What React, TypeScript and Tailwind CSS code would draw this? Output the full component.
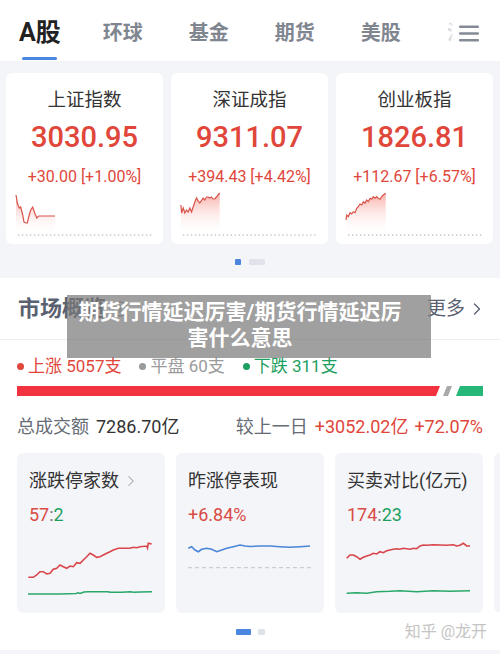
import React from 'react';
import { ChevronRight } from 'lucide-react';

const FONT = "font-['Roboto','Noto_Sans_CJK_SC',sans-serif]";

const indices = [
  {
    name: '上证指数',
    value: '3030.95',
    change: '+30.00 [+1.00%]',
    box: '6 192 157 45',
    line: '16,195 17.3,203 19.3,208 20.7,207 22.7,215 24,222 26,223 27.3,223 28.7,217 30.7,210 32.7,207 34.7,213 36.7,218 38.7,216 55,216',
    fill: '55,235 16,235',
    dots: [18, 153],
  },
  {
    name: '深证成指',
    value: '9311.07',
    change: '+394.43 [+4.42%]',
    box: '171 192 158 45',
    line: '181,205 181.7,213 183.3,208 185,213 186.7,210 188.3,212 190,208 191.7,212 193.3,207 195,202 196.7,198 198.3,201 200,203 203.3,198 205,200 206.7,197 208.3,197 210,198 211.7,197 213.3,199 215,199 216.7,197 218.3,195 220,193',
    fill: '220,235 181,235',
    dots: [183, 318],
  },
  {
    name: '创业板指',
    value: '1826.81',
    change: '+112.67 [+6.57%]',
    box: '336 192 157 45',
    line: '346,220 346.7,215 348.3,216.7 350,212.7 351.7,214 353.3,211.7 355,212.7 356.7,208.3 358.3,206.7 360,204 361.7,205 363.3,201.7 365,203.3 366.7,200 368.3,201.7 370,198.3 371.7,199.3 373.3,196.7 375,198.3 376.7,196.7 378.3,198.3 380,199.3 381.7,196.7 383.3,195 385.7,193.3',
    fill: '385.7,235 346,235',
    dots: [348, 483],
  },
];

function IndexCard({ item, idx }: { item: (typeof indices)[number]; idx: number }) {
  const gid = `spark-${idx}`;
  return (
    <div className="flex-1 bg-white rounded-[6px] flex flex-col items-center pt-[15px] pb-[7px]">
      <div className="text-[18.5px] leading-[24px] text-[#333]">{item.name}</div>
      <div className="mt-[7px] text-[29px] leading-[36px] font-medium text-[#e0463a]">{item.value}</div>
      <div className="mt-[12px] text-[16px] leading-[20px] text-[#e0463a]">{item.change}</div>
      <svg className="mt-[5px] block w-full h-[45px]" viewBox={item.box} preserveAspectRatio="none">
        <defs>
          <linearGradient id={gid} x1="0" y1="0" x2="0" y2="1">
            <stop offset="0%" stopColor="#f26b5f" stopOpacity="0.55" />
            <stop offset="100%" stopColor="#ffffff" stopOpacity="0" />
          </linearGradient>
        </defs>
        <polygon points={`${item.line} ${item.fill}`} fill={`url(#${gid})`} />
        <polyline points={item.line} fill="none" stroke="#d9534a" strokeWidth="1.2" />
        <line x1={item.dots[0]} y1="235" x2={item.dots[1]} y2="235" stroke="#c9c9c9" strokeWidth="1.4" strokeDasharray="1.4 2.6" />
      </svg>
    </div>
  );
}

function Legend({ dot, label, value, color }: { dot: string; label: string; value: string; color: string }) {
  return (
    <div className={`flex items-center ${color}`}>
      <span className={`w-[7px] h-[7px] rounded-full mr-[4px] ${dot}`} />
      <span>{label} {value}</span>
    </div>
  );
}

export default function App() {
  return (
    <div className={`w-[500px] h-[654px] overflow-hidden bg-[#f4f5f9] ${FONT}`}>
      {/* tabs */}
      <div className="h-[61px] bg-white flex items-start pl-[19px] pt-[19px]">
        <div className="flex items-start gap-[46px]">
          <div className="flex flex-col items-center mr-[-4px]">
            <span className="text-[25px] leading-[28px] font-bold text-[#222]">A股</span>
            <span className="mt-[10px] w-[35px] h-[3px] rounded-full bg-[#4a86e0]" />
          </div>
          {['环球', '基金', '期货', '美股'].map((t) => (
            <span key={t} className="text-[20px] leading-[28px] font-bold text-[#7f8690]">{t}</span>
          ))}
        </div>
        <div className="ml-auto mr-[21px] flex items-center h-[28px]">
          <span className="text-[20px] leading-[28px] font-bold bg-gradient-to-r from-[#cfd3d9] from-[10%] to-transparent to-[35%] bg-clip-text text-transparent mr-[-8px]">
            沪
          </span>
          <svg width="20" height="17" viewBox="0 0 20 17" className="relative">
            <rect x="0" y="0.5" width="20" height="2.6" rx="1" fill="#858b96" />
            <rect x="0" y="7.2" width="20" height="2.6" rx="1" fill="#858b96" />
            <rect x="0" y="13.9" width="20" height="2.6" rx="1" fill="#858b96" />
          </svg>
        </div>
      </div>

      {/* index cards */}
      <div className="pt-[12px] pl-[6px] pr-[7px] flex gap-[8px]">
        {indices.map((it, i) => (
          <IndexCard key={it.name} item={it} idx={i} />
        ))}
      </div>
      <div className="flex justify-center items-center gap-[8px] mt-[15px] h-[6px]">
        <span className="w-[6px] h-[6px] bg-[#4a86e0] rounded-[1px]" />
        <span className="w-[16px] h-[6px] bg-[#e1e3ec] rounded-[1px]" />
      </div>

      {/* market overview */}
      <div className="relative mt-[13px] bg-white h-[372px]">
        <div className="flex items-center justify-between pl-[18px] pr-[13px] pt-[16px] pb-[15px]">
          <div className="flex items-center gap-[6px]">
            <span className="text-[22px] leading-[30px] font-bold text-[#5a6170]">市场概览</span>
            <svg width="16" height="16" viewBox="0 0 16 16">
              <circle cx="8" cy="8" r="7" fill="none" stroke="#9aa0aa" strokeWidth="1.5" />
              <rect x="7.2" y="6.8" width="1.6" height="5" fill="#9aa0aa" />
              <rect x="7.2" y="4" width="1.6" height="1.6" fill="#9aa0aa" />
            </svg>
          </div>
          <div className="flex items-center text-[19px] leading-[30px] text-[#5a6170]">
            更多
            <ChevronRight size={20} strokeWidth={1.6} className="ml-[2px]" />
          </div>
        </div>
        <div className="h-px bg-[#eeeeee]" />

        <div className="px-[17px] pt-[14px] flex items-center gap-[18px] text-[17px] leading-[24px]">
          <Legend dot="bg-[#e0463a]" label="上涨" value="5057支" color="text-[#e0463a]" />
          <Legend dot="bg-[#9a9a9a]" label="平盘" value="60支" color="text-[#9a9a9a]" />
          <Legend dot="bg-[#1d9f5f]" label="下跌" value="311支" color="text-[#1d9f5f]" />
        </div>

        <svg className="block mt-[8px]" width="500" height="10" viewBox="0 386 500 10">
          <polygon points="17,386 440,386 436,396 17,396" fill="#f2333f" />
          <polygon points="447,386 452,386 448,396 443,396" fill="#a9a9a9" />
          <polygon points="460,386 483,386 483,396 456,396" fill="#25b777" />
        </svg>

        <div className="mt-[19px] px-[17px] flex items-center justify-between text-[18px] leading-[24px]">
          <div>
            <span className="text-[#666b75]">总成交额</span>
            <span className="ml-[7px] text-[#333]">7286.70亿</span>
          </div>
          <div>
            <span className="text-[#666b75]">较上一日</span>
            <span className="ml-[7px] text-[#e0463a]">+3052.02亿</span>
            <span className="ml-[6px] text-[#e0463a]">+72.07%</span>
          </div>
        </div>

        {/* mini cards */}
        <div className="mt-[14px] pl-[17px] flex gap-[11px] overflow-hidden">
          <div className="w-[148px] shrink-0 h-[160px] rounded-[6px] bg-[#f4f5f9] pt-[16px]">
            <div className="px-[12px] flex items-center text-[18px] leading-[24px] text-[#333]">
              涨跌停家数
              <ChevronRight size={18} strokeWidth={1.4} className="ml-[3px] text-[#a0a4ab]" />
            </div>
            <div className="px-[12px] mt-[10px] text-[18px] leading-[24px]">
              <span className="text-[#d94b45]">57</span>
              <span className="text-[#777]">:</span>
              <span className="text-[#1d9f5f]">2</span>
            </div>
            <svg className="block mt-[8px]" width="148" height="70" viewBox="17 535 148 70">
              <polyline
                points="28.3,577.3 33.3,577.3 36.7,575 40,571.7 43.3,571.7 46.7,574 50,573.3 53.3,569.3 56.7,568.3 60,565 63.3,566.7 66.7,568.3 70,566 73.3,566.7 76.7,562.7 80,563.3 83.3,560 86.7,556.7 90,553.3 93.3,555 96.7,557.3 100,556.7 103.3,555 106.7,553.3 110,551.7 113.3,550 118.3,548.3 123.3,548.3 130,548.3 133.3,547.3 136.7,547.7 140,546.7 146.7,546 147.5,548 148.3,543.3 151.7,544"
                fill="none"
                stroke="#d8454a"
                strokeWidth="1.6"
              />
              <polyline
                points="28,594 60,594 76,593.5 78,592.8 80,593.5 84,592 88,591.7 108,591.7 110,592.3 122,592.3 130,591.7 134,592.3 140,592 152,591.7"
                fill="none"
                stroke="#2aa86a"
                strokeWidth="1.6"
              />
            </svg>
          </div>

          <div className="w-[148px] shrink-0 h-[160px] rounded-[6px] bg-[#f4f5f9] pt-[16px]">
            <div className="px-[12px] text-[18px] leading-[24px] text-[#333]">昨涨停表现</div>
            <div className="px-[12px] mt-[10px] text-[18px] leading-[24px] text-[#d94b45]">+6.84%</div>
            <svg className="block mt-[8px]" width="148" height="70" viewBox="176 535 148 70">
              <polyline
                points="188.3,548.3 191.7,546.7 195,550 198.3,551.7 201.7,549.3 206.7,548.3 211.7,549.3 216.7,551.7 221.7,550 226.7,548.3 233.3,546.7 240,545 245,546 250,546.5 260,546 270,546 280,546.7 290,547.3 300,546.7 310,546"
                fill="none"
                stroke="#4a86d8"
                strokeWidth="1.6"
              />
              <line x1="188" y1="567.7" x2="312" y2="567.7" stroke="#c4c6cc" strokeWidth="1" strokeDasharray="4 3" />
            </svg>
          </div>

          <div className="w-[148px] shrink-0 h-[160px] rounded-[6px] bg-[#f4f5f9] pt-[16px]">
            <div className="px-[12px] text-[18px] leading-[24px] text-[#333]">买卖对比(亿元)</div>
            <div className="px-[12px] mt-[10px] text-[18px] leading-[24px]">
              <span className="text-[#d94b45]">174</span>
              <span className="text-[#777]">:</span>
              <span className="text-[#1d9f5f]">23</span>
            </div>
            <svg className="block mt-[8px]" width="148" height="70" viewBox="335 535 148 70">
              <polyline
                points="346.7,558.3 350,555 353.3,555 356.7,556.7 360,559.3 363.3,557.3 366.7,556 370,555 373.3,553.3 376.7,554 380,551.7 383.3,552.7 386.7,550.7 390,550 393.3,549.3 396.7,548.7 400,549.3 403.3,548.3 406.7,548.7 410,549.3 413.3,548.3 416.7,548.7 420,546 423.3,545 426.7,545.3 433.3,544.7 440,545 446.7,545.3 453.3,544.7 456.7,546 460,545.3 463.3,543.3 466.7,546 470,546"
                fill="none"
                stroke="#d8454a"
                strokeWidth="1.6"
              />
              <polyline
                points="346.7,593.3 356.7,592.7 366.7,593.3 376.7,591.7 390,591.3 400,590.7 416.7,591.7 433.3,590.7 450,591.3 470,590.7"
                fill="none"
                stroke="#2aa86a"
                strokeWidth="1.6"
              />
            </svg>
          </div>

          <div className="w-[148px] shrink-0 h-[160px] rounded-[6px] bg-[#f4f5f9]" />
        </div>

        <div className="mt-[16px] flex justify-center items-center gap-[7px]">
          <span className="w-[15px] h-[6px] bg-[#4a86e0] rounded-[1px]" />
          <span className="w-[7px] h-[6px] bg-[#e1e3ec] rounded-[1px]" />
        </div>

        <div className="absolute right-[13px] top-[343px] text-[16px] leading-[22px] text-[#c4c4c4]">知乎 @龙开</div>

        {/* caption overlay */}
        <div className="absolute left-[67px] top-[17px] w-[364px] bg-[rgba(120,120,120,0.7)] pl-[8px] pr-[26px] pt-[4px] pb-[7px] text-center text-white font-bold text-[21px] leading-[26px]">
          期货行情延迟厉害/期货行情延迟厉害什么意思
        </div>
      </div>
    </div>
  );
}
